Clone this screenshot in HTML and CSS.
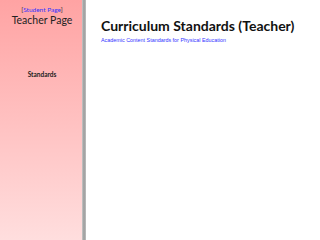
FILE: index.html
```html
<!DOCTYPE html>
<html>
	<head>
		<meta charset="utf-8">
		<title>Curriculum Standards</title>
		<link rel="stylesheet" href="styles.css">
	</head>
	<body>
		<div class="page">
			<div class="side">
				<div class="side-link">[<a href="#">Student Page</a>]</div>
				<div class="side-title">Teacher Page</div>
				<div class="side-nav">Standards</div>
			</div>
			<div class="side-edge"></div>
			<div class="main">
				<h1 class="main-title">Curriculum Standards (Teacher)</h1>
				<a class="main-sub" href="#">Academic Content Standards for Physical Education</a>
			</div>
		</div>
	</body>
</html>
```

FILE: styles.css
```css
body{
	margin: 0;
	font-family: Lato, "Open Sans", sans-serif;
	background: #fff;
}
.page{
	display: flex;
	height: 240px;
}
.side{
	width: 80px;
	padding-left: 2px;
	background: linear-gradient(#ffa3a3, #ffdede);
	text-align: center;
	color: #222;
}
.side-edge{
	width: 4px;
	background: linear-gradient(to right, #c8c8c8, #9a9a9a, #c0c0c0);
}
.side-link{
	font-size: 6.5px;
	padding-top: 6px;
	color: #333;
}
.side-link a{
	color: #3333ff;
	text-decoration: none;
}
.side-title{
	font-size: 10.5px;
	margin-top: 1px;
}
.side-nav{
	font-size: 6.5px;
	font-weight: bold;
	margin-top: 45px;
}
.main{
	padding: 17px 0 0 15px;
}
.main-title{
	font-size: 14px;
	font-weight: bold;
	margin: 0;
	color: #111;
}
.main-sub{
	display: block;
	margin-top: 3px;
	font-family: "Liberation Sans", Arial, sans-serif;
	font-size: 5.4px;
	color: #3333ff;
	text-decoration: none;
}
```
